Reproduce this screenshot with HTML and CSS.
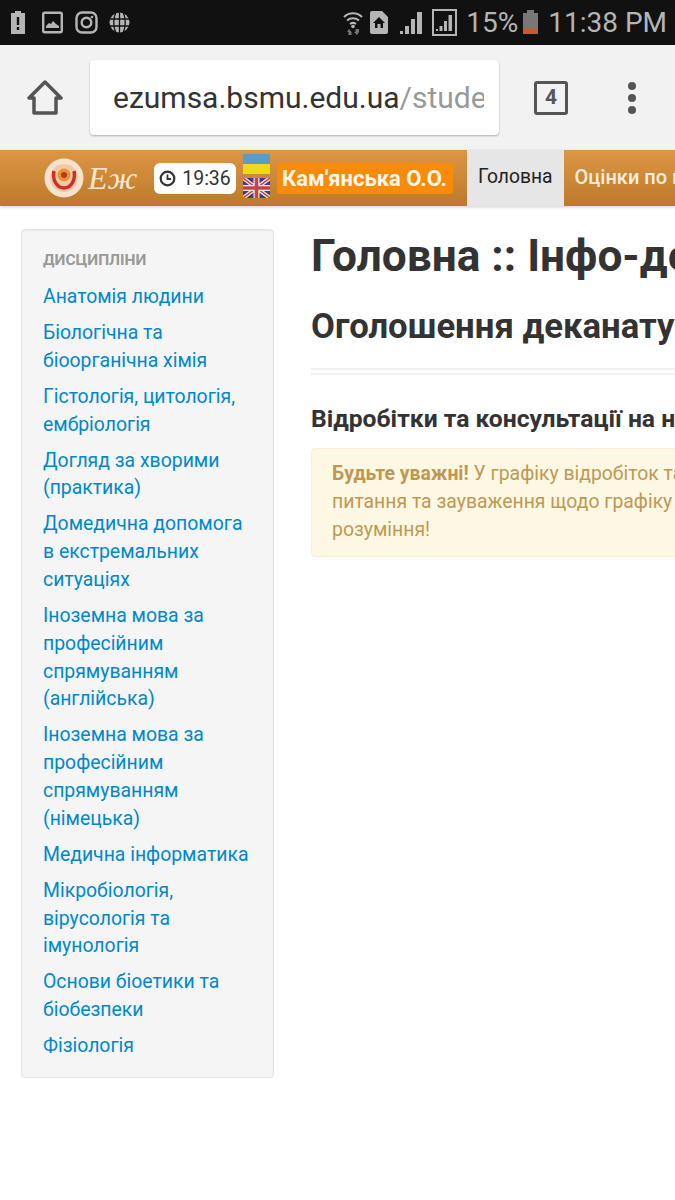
FILE: index.html
```html
<!DOCTYPE html>
<html lang="uk">
<head>
    <meta charset="UTF-8">
    <title>Головна</title>
    <link rel="stylesheet" href="styles.css">
</head>
<body>
<div class="statusbar">
    <div class="status-left">
        <svg class="icon-battery" width="16" height="23" viewBox="0 0 16 23"><path fill="#b5b5b5" d="M5 0h6v2h4v21H1V2h4z"/><path fill="#111" d="M6.800 6h2.400v8H6.800zM6.800 16h2.400v3H6.800z"/></svg>
        <svg class="icon-image" width="21" height="23" viewBox="0 0 21 23"><rect x="1.200" y="1.700" width="18.600" height="19.600" rx="1.500" fill="none" stroke="#b5b5b5" stroke-width="2.400"/><path fill="#b5b5b5" d="M4 17v-2l3-3 2 1 2-3 3 3 3 2v2z"/></svg>
        <svg class="icon-insta" width="23" height="23" viewBox="0 0 23 23"><rect x="1.500" y="1.500" width="20" height="20" rx="5.500" fill="none" stroke="#b5b5b5" stroke-width="2.400"/><circle cx="11.500" cy="11.500" r="4.800" fill="none" stroke="#b5b5b5" stroke-width="2.400"/><circle cx="17" cy="6" r="1.300" fill="#b5b5b5"/></svg>
        <svg class="icon-globe" width="21" height="21" viewBox="0 0 21 21"><circle cx="10.500" cy="10.500" r="10" fill="#b5b5b5"/><path stroke="#111" stroke-width="1.300" fill="none" d="M0 7h21M0 14h21M7 0C4 6 4 15 7 21M14 0c3 6 3 15 0 21M10.500 0v21"/></svg>
    </div>
    <div class="status-right">
        <svg width="22" height="27" viewBox="0 0 22 27"><path fill="none" stroke="#b5b5b5" stroke-width="2" d="M2 8c5-5 13-5 18 0M5 11.500c3.500-3 8.500-3 12 0M8 15c2-1.500 4-1.500 6 0"/><circle cx="11" cy="17.500" r="1.800" fill="#b5b5b5"/><path fill="#777" d="M7 20l2.500 3v3h-3v-3H5zM15 26l2-3v-3h-3.500v3H12z"/></svg>
        <svg class="sim" width="18" height="23" viewBox="0 0 18 23"><path fill="#b5b5b5" d="M2 0h10l6 6v15a2 2 0 0 1-2 2H2a2 2 0 0 1-2-2V2a2 2 0 0 1 2-2z"/><path fill="#111" d="M9 6l6 6h-2v5H5v-5H3z"/><rect x="7.500" y="13" width="3" height="4" fill="#b5b5b5"/></svg>
        <svg class="signal" width="23" height="23" viewBox="0 0 23 23"><path fill="#b5b5b5" d="M0 23h3v-3H0zM5 23h4v-8H5zM11 23h4V8h-4zM17 23h5V1h-5z"/></svg>
        <div class="signal-box">
            <svg width="19" height="19" viewBox="0 0 19 19"><path fill="#b5b5b5" d="M1 18h2v-2H1zM4.500 18h3v-5h-3zM9 18h3V8H9zM13.500 18H17V2h-3.500z"/></svg>
        </div>
        <span class="status-text">15%</span>
        <div class="battery"><div class="battery-low"></div></div>
        <span class="status-text clock">11:38 PM</span>
    </div>
</div>

<div class="toolbar">
    <svg class="home" width="36" height="36" viewBox="0 0 36 36"><path fill="none" stroke="#555" stroke-width="3.500" stroke-linejoin="round" d="M2 18L18 2l16 16h-5v15H7V18z"/></svg>
    <div class="urlbox"><div class="url-text"><span class="url-host">ezumsa.bsmu.edu.ua</span><span class="url-path">/stude</span></div></div>
    <div class="tabcount">4</div>
    <div class="dots"><i></i><i></i><i></i></div>
</div>

<nav class="navbar">
    <div class="brand">
        <svg width="40" height="40" viewBox="0 0 40 40"><circle cx="20" cy="20" r="19.500" fill="#f6e3cf"/><circle cx="20" cy="20" r="14" fill="#f3c9a5"/><path fill="none" stroke="#c8322a" stroke-width="3.500" d="M10 13c-2 9 3 17 10 17s12-8 10-17"/><circle cx="20" cy="17" r="6.500" fill="#e8952c"/><circle cx="20" cy="17" r="3" fill="#b7362c"/></svg>
        <span class="brand-text">Еж</span>
    </div>
    <div class="timer">
        <svg width="17" height="17" viewBox="0 0 17 17"><circle cx="8.500" cy="8.500" r="6.800" fill="none" stroke="#333" stroke-width="2.200"/><path fill="none" stroke="#333" stroke-width="1.800" d="M8.500 4.500v4.500h3.500"/></svg>
        <span>19:36</span>
    </div>
    <div class="flags">
        <div class="flag-ua"></div>
        <svg width="27" height="20" viewBox="0 0 27 20"><rect width="27" height="20" fill="#3b3f78"/><path stroke="#f1e6e6" stroke-width="4" d="M0 0l27 20M27 0L0 20"/><path stroke="#c0444c" stroke-width="1.500" d="M0 0l27 20M27 0L0 20"/><path stroke="#f1e6e6" stroke-width="6" d="M13.500 0v20M0 10h27"/><path stroke="#c0444c" stroke-width="3.500" d="M13.500 0v20M0 10h27"/></svg>
    </div>
    <div class="username">Кам'янська О.О.</div>
    <a class="nav-item active">Головна</a>
    <a class="nav-item">Оцінки по модулях</a>
</nav>

<div class="page">
    <aside class="sidebar">
        <div class="sidebar-title">ДИСЦИПЛІНИ</div>
        <ul class="sidebar-list">
            <li><a>Анатомія людини</a></li>
            <li><a>Біологічна та біоорганічна хімія</a></li>
            <li><a>Гістологія, цитологія, ембріологія</a></li>
            <li><a>Догляд за хворими (практика)</a></li>
            <li><a>Домедична допомога в екстремальних ситуаціях</a></li>
            <li><a>Іноземна мова за професійним спрямуванням (англійська)</a></li>
            <li><a>Іноземна мова за професійним спрямуванням (німецька)</a></li>
            <li><a>Медична інформатика</a></li>
            <li><a>Мікробіологія, вірусологія та імунологія</a></li>
            <li><a>Основи біоетики та біобезпеки</a></li>
            <li><a>Фізіологія</a></li>
        </ul>
    </aside>
    <main class="content">
        <h1>Головна :: Інфо-деканат</h1>
        <h2>Оголошення деканату</h2>
        <div class="rule"></div>
        <h3>Відробітки та консультації на наступний тиждень</h3>
        <div class="alert">
            <b>Будьте уважні!</b> У графіку відробіток та консультацій<br>
            питання та зауваження щодо графіку<br>
            розуміння!
        </div>
    </main>
</div>
</body>
</html>
```

FILE: styles.css
```css
html, body {
    margin: 0;
    padding: 0;
    height: 1200px;
    overflow: hidden;
    background: white;
    font-family: Roboto, "Liberation Sans", sans-serif;
    color: #333;
}

.statusbar {
    height: 45px;
    background-color: #111;
    display: flex;
    justify-content: space-between;
    align-items: center;
    padding: 0 8px 0 10px;
    box-sizing: border-box;
    color: #b5b5b5;
}

.status-left {
    display: flex;
    align-items: center;
}

.icon-image {
    margin-left: 16px;
}

.icon-insta {
    margin-left: 12px;
}

.icon-globe {
    margin-left: 11px;
}

.status-right {
    display: flex;
    align-items: center;
}

.sim {
    margin-left: 6px;
}

.signal {
    margin-left: 12px;
}

.signal-box {
    width: 21px;
    height: 23px;
    margin-left: 9px;
    border: 2px solid #b5b5b5;
    display: flex;
    align-items: center;
    justify-content: center;
}

.status-text {
    font-size: 28px;
    line-height: 32px;
    margin-left: 9px;
    color: #b5b5b5;
}

.battery {
    width: 15px;
    height: 21px;
    margin: 2px 0 0 5px;
    background-color: #777;
    position: relative;
}

.battery::before {
    content: "";
    position: absolute;
    top: -3px;
    left: 4px;
    width: 7px;
    height: 3px;
    background-color: #777;
}

.battery-low {
    position: absolute;
    left: 0;
    right: 0;
    bottom: 0;
    height: 6px;
    background: linear-gradient(#a8683f, #d0552a);
}

.clock {
    margin-left: 10px;
}

.toolbar {
    height: 105px;
    background-color: #f2f2f2;
    display: flex;
    align-items: center;
}

.home {
    margin-left: 27px;
}

.urlbox {
    width: 409px;
    height: 75px;
    margin-left: 27px;
    padding: 0 15px 0 23px;
    box-sizing: border-box;
    background: white;
    border-radius: 4px;
    box-shadow: 0 1px 2px rgba(0, 0, 0, 0.3);
    font-size: 30px;
    line-height: 75px;
    white-space: nowrap;
}

.url-text {
    overflow: hidden;
}

.url-host {
    color: #333;
}

.url-path {
    color: #999;
}

.tabcount {
    width: 34px;
    height: 34px;
    margin-left: 35px;
    border: 3.500px solid #555;
    border-radius: 3px;
    box-sizing: border-box;
    text-align: center;
    font-size: 21px;
    font-weight: bold;
    line-height: 27px;
    color: #555;
}

.dots {
    margin-left: 60px;
    display: flex;
    flex-direction: column;
    gap: 4px;
}

.dots i {
    display: block;
    width: 8px;
    height: 8px;
    border-radius: 50%;
    background-color: #555;
}

.navbar {
    height: 56px;
    background: linear-gradient(#dc9644, #bd7a2c);
    display: flex;
    align-items: center;
    padding-left: 44px;
    box-shadow: 0 1px 3px rgba(0, 0, 0, 0.2);
    white-space: nowrap;
    overflow: hidden;
}

.navbar > * {
    flex-shrink: 0;
}

.brand {
    display: flex;
    align-items: center;
    width: 110px;
}

.brand-text {
    font-family: "Liberation Serif", serif;
    font-style: italic;
    font-size: 32px;
    line-height: 40px;
    color: #f8e6d2;
    margin-left: 4px;
}

.timer {
    width: 82px;
    height: 31px;
    background: white;
    border-radius: 6px;
    display: flex;
    align-items: center;
    justify-content: center;
    gap: 6px;
    font-size: 19.500px;
}

.flags {
    align-self: flex-start;
    margin: 4px 0 0 7px;
    width: 27px;
    display: flex;
    flex-direction: column;
    gap: 4px;
}

.flag-ua {
    height: 20px;
    background: linear-gradient(#5b9bc4 50%, #f0d820 50%);
}

.username {
    margin-left: 7px;
    height: 31px;
    padding: 0 6px 0 5px;
    background-color: #f68b0c;
    border-radius: 3px;
    color: #fff6e8;
    font-size: 22px;
    font-weight: bold;
    line-height: 31px;
}

.nav-item {
    display: block;
    height: 56px;
    padding: 0 11px;
    font-size: 20px;
    line-height: 54px;
    color: #fbeedd;
    font-weight: 500;
}

.nav-item.active {
    margin-left: 14px;
    background-color: #e6e6e6;
    color: #222;
    font-size: 19.300px;
    font-weight: 400;
}

.page {
    display: flex;
    align-items: flex-start;
    padding: 23px 0 0 21px;
}

.sidebar {
    width: 253px;
    flex-shrink: 0;
    box-sizing: border-box;
    padding: 19px 21px 13px;
    background-color: #f5f5f5;
    border: 1px solid #e3e3e3;
    border-radius: 4px;
    box-shadow: inset 0 1px 1px rgba(0, 0, 0, 0.05);
}

.sidebar-title {
    font-size: 15.500px;
    font-weight: bold;
    line-height: 22px;
    color: #999;
}

.sidebar-list {
    list-style: none;
    margin: 8px 0 0;
    padding: 0;
}

.sidebar-list li {
    padding: 4.100px 0;
    font-size: 19.400px;
    line-height: 27.800px;
    color: #0088cc;
}

.content {
    margin-left: 37px;
    width: 900px;
    flex-shrink: 0;
}

h1 {
    margin: 0;
    font-size: 44.200px;
    line-height: 54px;
    font-weight: bold;
    white-space: nowrap;
}

h2 {
    margin: 23px 0 0;
    font-size: 34.700px;
    line-height: 40px;
    font-weight: bold;
}

.rule {
    height: 3px;
    margin-top: 22px;
    border-top: 2px solid #f0f0f0;
    border-bottom: 2px solid #f0f0f0;
}

h3 {
    margin: 29px 0 0;
    font-size: 24.700px;
    line-height: 30px;
    font-weight: bold;
}

.alert {
    margin-top: 14px;
    padding: 11px 20px 13px;
    background-color: #fcf8e3;
    border: 1px solid #fbeed5;
    border-radius: 4px;
    font-size: 19.400px;
    line-height: 27.800px;
    color: #c09853;
    white-space: nowrap;
}
```
